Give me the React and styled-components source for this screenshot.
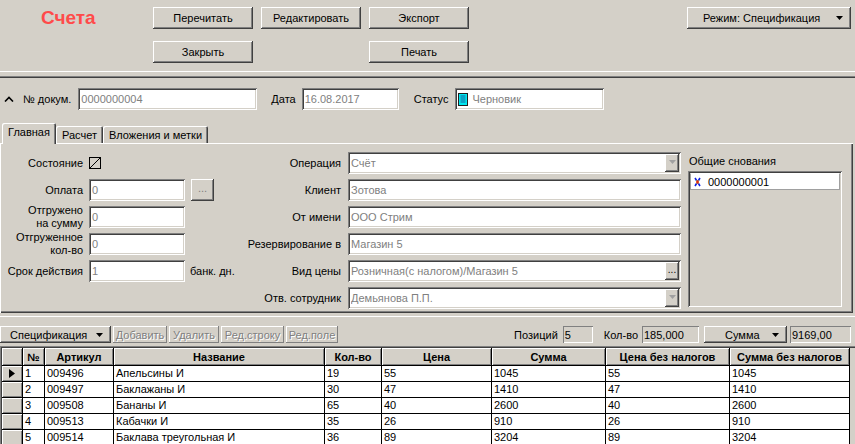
import React from 'react'
import styled, { createGlobalStyle, css } from 'styled-components'

const GlobalStyle = createGlobalStyle`
  html, body { margin: 0; padding: 0; background: #d4d0c8; }
  body {
    font-family: "Liberation Sans", Arial, sans-serif;
    font-size: 11px;
    color: #000;
  }
  * { box-sizing: border-box; }
`

const raised = css`
  box-shadow: inset -1px -1px #404040, inset 1px 1px #fff, inset -2px -2px #808080, inset 2px 2px #d4d0c8;
`
const sunken = css`
  box-shadow: inset 1px 1px #808080, inset -1px -1px #fff, inset 2px 2px #404040, inset -2px -2px #d4d0c8;
`

const Window = styled.div`
  width: 855px;
  height: 444px;
  overflow: hidden;
  display: flex;
  flex-direction: column;
  background: #d4d0c8;
`

// ---------- top toolbar
const TopBar = styled.div`
  height: 71px;
  display: flex;
  align-items: flex-start;
  padding-top: 7px;
`
const Title = styled.div`
  width: 153px;
  padding-left: 41px;
  line-height: 22px;
  font-size: 19px;
  font-weight: bold;
  color: #ff4a4a;
`
const ButtonGrid = styled.div`
  display: grid;
  grid-template-columns: repeat(3, 100px);
  grid-template-rows: 22px 22px;
  column-gap: 8px;
  row-gap: 12px;
`
const Button = styled.div`
  height: 22px;
  display: flex;
  align-items: center;
  justify-content: center;
  background: #d4d0c8;
  ${raised}
  grid-column: ${p => p.$col || 'auto'};
  grid-row: ${p => p.$row || 'auto'};
`
const ModeButton = styled(Button)`
  width: 164px;
  margin-left: auto;
  margin-right: 4px;
  justify-content: flex-start;
  padding: 0 8px 0 16px;
`
const Arrow = styled.svg`
  margin-left: auto;
  flex: none;
`

const Splitter = styled.div`
  height: 7px;
  border-top: 1px solid #fff;
  box-shadow: inset 0 -1px #404040, inset 0 -2px #808080;
`

// ---------- document header
const HeaderRow = styled.div`
  margin-top: 10px;
  height: 22px;
  display: flex;
  align-items: center;
`
const Chevron = styled.svg`
  margin: 0 9px 0 4px;
`
const Label = styled.span`
  margin-right: ${p => p.$mr || 0}px;
  margin-left: ${p => p.$ml || 0}px;
  white-space: nowrap;
`
const Field = styled.div`
  width: ${p => (p.$w ? p.$w + 'px' : '100%')};
  height: ${p => p.$h || 22}px;
  background: ${p => (p.$gray ? '#d4d0c8' : '#fff')};
  ${sunken}
  color: ${p => (p.$gray ? '#000' : '#808080')};
  padding: 0 2px 0 3px;
  display: flex;
  align-items: center;
  white-space: nowrap;
  overflow: hidden;
`
const ThinField = styled(Field)`
  box-shadow: inset 1px 1px #808080, inset -1px -1px #fff;
  padding-left: 2px;
`
const FieldText = styled.span`
  flex: 1;
  overflow: hidden;
`
const InnerButton = styled.div`
  flex: none;
  width: 14px;
  height: 18px;
  background: #d4d0c8;
  ${raised}
  display: flex;
  align-items: center;
  justify-content: center;
  color: ${p => (p.$disabled ? '#a0a0a0' : '#000')};
  font-size: 10px;
  line-height: 1;
  padding-bottom: 3px;
`

// ---------- tabs
const TabStrip = styled.div`
  margin-top: 13px;
  height: 20px;
  display: flex;
  align-items: flex-end;
  padding-left: 2px;
  position: relative;
  z-index: 1;
`
const Tab = styled.div`
  height: ${p => (p.$active ? 21 : 17)}px;
  margin-bottom: ${p => (p.$active ? -1 : 0)}px;
  width: ${p => p.$w}px;
  display: flex;
  justify-content: center;
  align-items: ${p => (p.$active ? 'flex-start' : 'center')};
  padding-top: ${p => (p.$active ? 3 : 0)}px;
  background: #d4d0c8;
  border-radius: 2px 2px 0 0;
  box-shadow: inset 1px 1px #fff, inset -1px 0 #404040, inset -2px 0 #808080;
`
const Panel = styled.div`
  width: 853px;
  height: 170px;
  border-top: 1px solid #fff;
  box-shadow: inset 1px 0 #fff, inset -1px -1px #404040, inset -2px -2px #808080;
  display: flex;
  align-items: flex-start;
  padding-top: 8px;
`
const FormColumn = styled.div`
  width: ${p => p.$w}px;
  flex: none;
  display: grid;
  grid-template-columns: ${p => p.$cols};
  column-gap: ${p => p.$gap}px;
  row-gap: 5px;
  grid-auto-rows: 22px;
  align-items: center;
`
const FormLabel = styled.div`
  text-align: right;
  line-height: 13px;
  white-space: nowrap;
`
const Inline = styled.div`
  display: flex;
  align-items: center;
  gap: ${p => p.$gap || 0}px;
`
const DotsButton = styled(Button)`
  width: 23px;
  color: #808080;
  padding-bottom: 4px;
`
const CheckIcon = styled.svg`
  display: block;
`
const RightColumn = styled.div`
  margin-left: 7px;
  width: 154px;
  display: flex;
  flex-direction: column;
`
const GroupLabel = styled.div`
  height: 19px;
  padding: 3px 0 0 1px;
`
const ListBox = styled.div`
  height: 136px;
  ${sunken}
  background: #d4d0c8;
  padding: 2px 2px;
`
const ListItem = styled.div`
  height: 17px;
  background: #fff;
  border: 1px solid #a0a0a0;
  border-top-color: #fff;
  display: flex;
  align-items: center;
  gap: 7px;
  padding-left: 3px;
`

// ---------- bottom
const Bottom = styled.div`
  margin-top: 3px;
  border-top: 1px solid #fff;
  padding-top: 9px;
  display: flex;
  flex-direction: column;
  flex: 1;
  min-height: 0;
`
const Toolbar = styled.div`
  height: 17px;
  display: flex;
  align-items: center;
`
const SpecButton = styled(Button)`
  height: 17px;
  width: 111px;
  justify-content: flex-start;
  padding: 0 8px 0 10px;
`
const FlatButton = styled(Button)`
  height: 17px;
  width: ${p => p.$w}px;
  margin-left: 2px;
  color: #808080;
  text-shadow: 1px 1px #fff;
  box-shadow: inset -1px -1px #808080, inset 1px 1px #fff;
`
const Totals = styled.div`
  margin-left: auto;
  margin-right: 4px;
  display: flex;
  align-items: center;
`
const SumButton = styled(Button)`
  height: 17px;
  width: 83px;
  justify-content: flex-start;
  padding: 0 8px 0 21px;
  margin: 0 3px 0 5px;
`

const GridFrame = styled.div`
  margin-top: 3px;
  flex: 1;
  border-top: 1px solid #808080;
  border-left: 1px solid #808080;
`
const GridInner = styled.div`
  height: 100%;
  border-top: 1px solid #404040;
  border-left: 1px solid #404040;
`
const GridRow = styled.div`
  display: grid;
  grid-template-columns: 21px 22px 69px 211px 57px 110px 114px 124px 120px;
`
const HeadCell = styled.div`
  height: 18px;
  background: #d4d0c8;
  border-right: 1px solid #000;
  border-bottom: 1px solid #000;
  box-shadow: inset 1px 1px #fff, inset -1px -1px #808080;
  font-weight: bold;
  display: flex;
  align-items: center;
  justify-content: center;
  white-space: nowrap;
  overflow: hidden;
`
const Cell = styled.div`
  height: 16px;
  background: #fff;
  border-right: 1px solid #000;
  border-bottom: 1px solid #000;
  padding-left: 2px;
  line-height: 15px;
  white-space: nowrap;
  overflow: hidden;
`
const IndicatorCell = styled(Cell)`
  background: #d4d0c8;
  box-shadow: inset 1px 1px #fff, inset -1px -1px #808080;
  display: flex;
  align-items: center;
  padding-left: 7px;
`

const DownArrow = ({ color = '#000' }) => (
  <Arrow width="7" height="4" viewBox="0 0 7 4">
    <polygon points="0,0 7,0 3.5,4" fill={color} />
  </Arrow>
)

const columns = ['', '№', 'Артикул', 'Название', 'Кол-во', 'Цена', 'Сумма', 'Цена без налогов', 'Сумма без налогов']

const rows = [
  ['1', '009496', 'Апельсины И', '19', '55', '1045', '55', '1045'],
  ['2', '009497', 'Баклажаны И', '30', '47', '1410', '47', '1410'],
  ['3', '009508', 'Бананы И', '65', '40', '2600', '40', '2600'],
  ['4', '009513', 'Кабачки И', '35', '26', '910', '26', '910'],
  ['5', '009514', 'Баклава треугольная И', '36', '89', '3204', '89', '3204'],
]

function StatusIcon() {
  return (
    <svg width="10" height="13" viewBox="0 0 10 13" style={{ marginRight: 4, flex: 'none' }}>
      <rect x="0.5" y="0.5" width="9" height="12" fill="#00e8f0" stroke="#202020" />
      <line x1="2.5" y1="3" x2="7.5" y2="3" stroke="#1a5f9a" />
      <line x1="2.5" y1="5" x2="7.5" y2="5" stroke="#1a5f9a" />
      <line x1="2.5" y1="7" x2="7.5" y2="7" stroke="#1a5f9a" />
      <line x1="2.5" y1="9" x2="7.5" y2="9" stroke="#1a5f9a" />
    </svg>
  )
}

function LinkIcon() {
  return (
    <svg width="7" height="10" viewBox="0 0 7 10">
      <path d="M1 1 L6 9 M6 1 L1 9" stroke="#1020e0" strokeWidth="1.6" />
      <rect x="2" y="3.5" width="3" height="3" fill="#f0d020" />
      <path d="M3.5 3 L5 5 L3.5 7 L2 5 Z" fill="#e02020" />
    </svg>
  )
}

export default function App() {
  return (
    <Window>
      <GlobalStyle />
      <TopBar>
        <Title>Счета</Title>
        <ButtonGrid>
          <Button>Перечитать</Button>
          <Button>Редактировать</Button>
          <Button>Экспорт</Button>
          <Button $col="1" $row="2">Закрыть</Button>
          <Button $col="3" $row="2">Печать</Button>
        </ButtonGrid>
        <ModeButton>
          Режим: Спецификация
          <DownArrow />
        </ModeButton>
      </TopBar>
      <Splitter />

      <HeaderRow>
        <Chevron width="10" height="6" viewBox="0 0 10 6">
          <polyline points="1,5.5 5,1.5 9,5.5" fill="none" stroke="#000" strokeWidth="1.6" />
        </Chevron>
        <Label $mr={7}>№ докум.</Label>
        <Field $w={179}>0000000004</Field>
        <Label $ml={14} $mr={6}>Дата</Label>
        <Field $w={97}>16.08.2017</Field>
        <Label $ml={15} $mr={7}>Статус</Label>
        <Field $w={149}>
          <StatusIcon />
          Черновик
        </Field>
      </HeaderRow>

      <TabStrip>
        <Tab $active $w={54}>Главная</Tab>
        <Tab $w={47}>Расчет</Tab>
        <Tab $w={105}>Вложения и метки</Tab>
      </TabStrip>
      <Panel>
        <FormColumn $w={241} $cols="83px 96px 1fr" $gap={6}>
          <FormLabel>Состояние</FormLabel>
          <CheckIcon width="12" height="12" viewBox="0 0 12 12">
            <rect x="0.5" y="0.5" width="11" height="11" fill="#d4d0c8" stroke="#000" />
            <line x1="1" y1="11" x2="11" y2="1" stroke="#000" />
          </CheckIcon>
          <span />

          <FormLabel>Оплата</FormLabel>
          <Field>0</Field>
          <Inline><DotsButton>...</DotsButton></Inline>

          <FormLabel>Отгружено<br />на сумму</FormLabel>
          <Field>0</Field>
          <span />

          <FormLabel>Отгруженное<br />кол-во</FormLabel>
          <Field>0</Field>
          <span />

          <FormLabel>Срок действия</FormLabel>
          <Field>1</Field>
          <Label $ml={-1}>банк. дн.</Label>
        </FormColumn>

        <FormColumn $w={440} $cols="100px 333px" $gap={7}>
          <FormLabel>Операция</FormLabel>
          <Field>
            <FieldText>Счёт</FieldText>
            <InnerButton $disabled>
              <svg width="7" height="4" viewBox="0 0 7 4"><polygon points="0,0 7,0 3.5,4" fill="#a0a0a0" /></svg>
            </InnerButton>
          </Field>
          <FormLabel>Клиент</FormLabel>
          <Field>Зотова</Field>
          <FormLabel>От имени</FormLabel>
          <Field>ООО Стрим</Field>
          <FormLabel>Резервирование в</FormLabel>
          <Field>Магазин 5</Field>
          <FormLabel>Вид цены</FormLabel>
          <Field>
            <FieldText>Розничная(с налогом)/Магазин 5</FieldText>
            <InnerButton>...</InnerButton>
          </Field>
          <FormLabel>Отв. сотрудник</FormLabel>
          <Field>
            <FieldText>Демьянова П.П.</FieldText>
            <InnerButton $disabled>
              <svg width="7" height="4" viewBox="0 0 7 4"><polygon points="0,0 7,0 3.5,4" fill="#a0a0a0" /></svg>
            </InnerButton>
          </Field>
        </FormColumn>

        <RightColumn>
          <GroupLabel>Общие снования</GroupLabel>
          <ListBox>
            <ListItem>
              <LinkIcon />
              0000000001
            </ListItem>
          </ListBox>
        </RightColumn>
      </Panel>

      <Bottom>
        <Toolbar>
          <SpecButton>
            Спецификация
            <DownArrow />
          </SpecButton>
          <FlatButton $w={54}>Добавить</FlatButton>
          <FlatButton $w={50}>Удалить</FlatButton>
          <FlatButton $w={63}>Ред.строку</FlatButton>
          <FlatButton $w={52}>Ред.поле</FlatButton>
          <Totals>
            <Label $mr={5}>Позиций</Label>
            <ThinField $w={30} $h={17} $gray>5</ThinField>
            <Label $ml={11} $mr={4}>Кол-во</Label>
            <ThinField $w={57} $h={17} $gray>185,000</ThinField>
            <SumButton>
              Сумма
              <DownArrow />
            </SumButton>
            <ThinField $w={61} $h={17} $gray>9169,00</ThinField>
          </Totals>
        </Toolbar>

        <GridFrame>
          <GridInner>
            <GridRow>
              {columns.map((c, i) => (
                <HeadCell key={i}>{c}</HeadCell>
              ))}
            </GridRow>
            {rows.map((r, ri) => (
              <GridRow key={ri}>
                <IndicatorCell>
                  {ri === 0 && (
                    <svg width="6" height="9" viewBox="0 0 6 9">
                      <polygon points="0,0 6,4.5 0,9" fill="#000" />
                    </svg>
                  )}
                </IndicatorCell>
                {r.map((v, ci) => (
                  <Cell key={ci}>{v}</Cell>
                ))}
              </GridRow>
            ))}
          </GridInner>
        </GridFrame>
      </Bottom>
    </Window>
  )
}
